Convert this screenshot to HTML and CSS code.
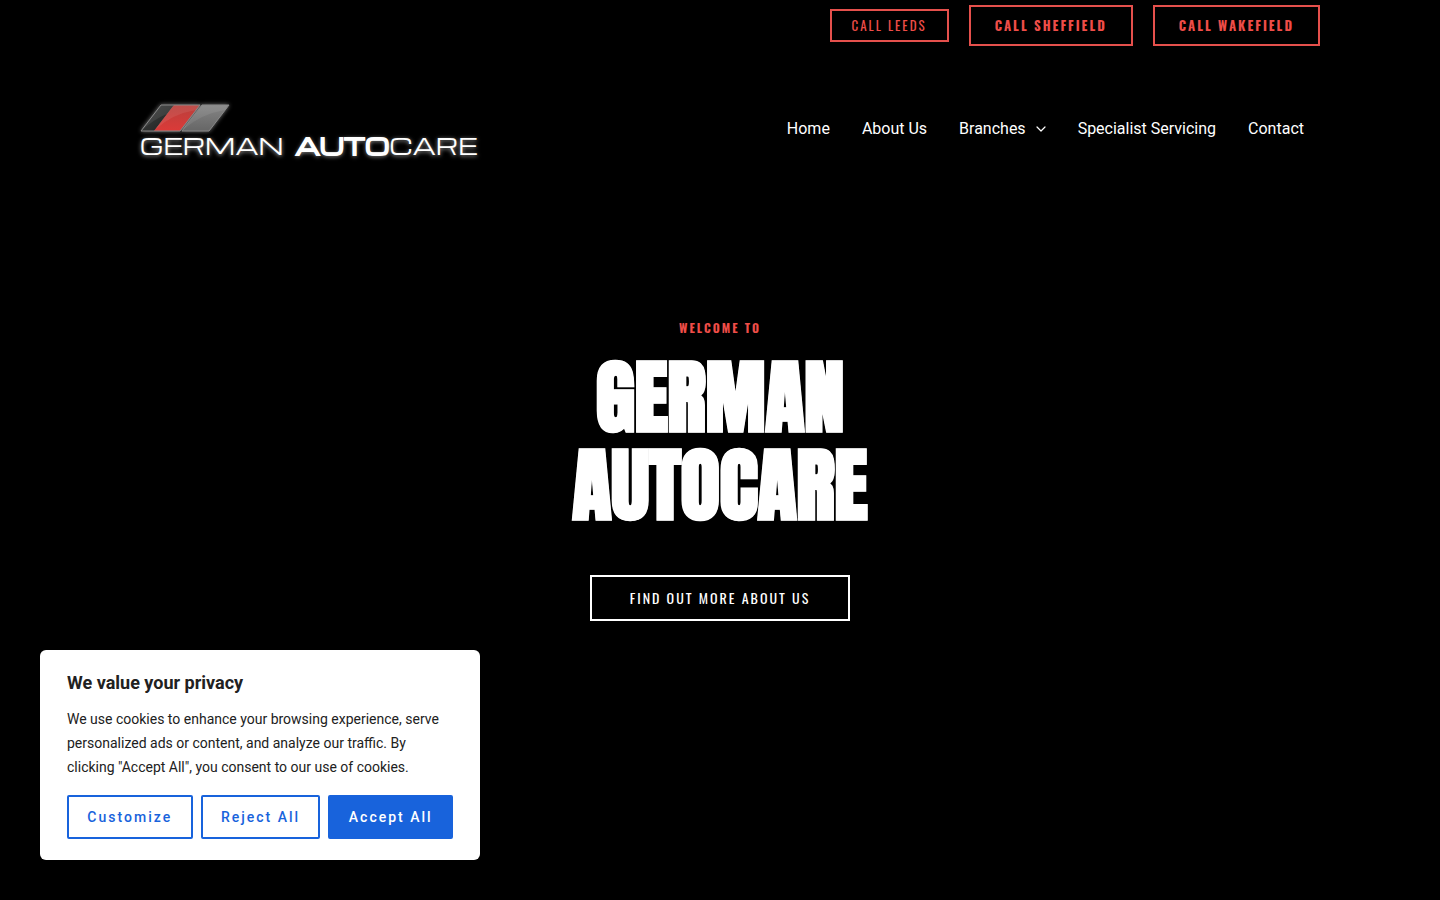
FILE: index.html
```
<!DOCTYPE html>
<html lang="en">
<head>
    <meta charset="UTF-8">
    <meta name="viewport" content="width=device-width, initial-scale=1.0">
    <title>German Autocare</title>
    <link rel="stylesheet" href="styles.css">
</head>

<body>
<div class="top-bar">
    <div class="container top-bar-inner">
        <a class="call-btn call-btn-small" href="#leeds">CALL LEEDS</a>
        <a class="call-btn" href="#sheffield">CALL SHEFFIELD</a>
        <a class="call-btn" href="#wakefield">CALL WAKEFIELD</a>
    </div>
</div>

<header class="container site-header">
    <a class="logo" href="#">
        <svg class="logo-mark" width="96" height="34" viewBox="1 -2 96 34" aria-hidden="true">
            <defs>
                <linearGradient id="dark" x1="0" y1="0" x2="1" y2="1">
                    <stop offset="0" stop-color="#444"/>
                    <stop offset="1" stop-color="#1c1f1e"/>
                </linearGradient>
                <linearGradient id="red" x1="0" y1="0" x2="0" y2="1">
                    <stop offset="0" stop-color="#b8403c"/>
                    <stop offset="1" stop-color="#dc3a38"/>
                </linearGradient>
                <linearGradient id="grey" x1="0" y1="0" x2="0" y2="1">
                    <stop offset="0" stop-color="#858585"/>
                    <stop offset="1" stop-color="#666"/>
                </linearGradient>
            </defs>
            <path d="M22 3H35L15 29H2Z" fill="url(#dark)"/>
            <path d="M35 3H61L41 29H15Z" fill="url(#red)"/>
            <path d="M63 3H90L70 29H43Z" fill="url(#grey)"/>
            <path d="M22 3H35L28 12Q15 17 2 29Z" fill="#fff" opacity=".08"/>
            <path d="M35 3H61L57 8Q33 12 17 27Z" fill="#fff" opacity=".08"/>
            <path d="M63 3H90L86 8Q62 12 45 27Z" fill="#fff" opacity=".08"/>
            <path d="M22 3H61L41 29H2Z M63 3H90L70 29H43Z" fill="none" stroke="#888" stroke-width="1"/>
        </svg>
        <span class="logo-name">
            <span>GERMAN</span>
            <span><b>AUTO</b>CARE</span>
        </span>
    </a>
    <nav class="main-nav">
        <a href="#home">Home</a>
        <a href="#about">About Us</a>
        <a href="#branches">Branches
            <svg class="arrow" width="10" height="6" viewBox="0 0 10 6" aria-hidden="true">
                <path d="M1 1L5 5L9 1" fill="none" stroke="currentColor" stroke-width="1.2" stroke-linecap="round" stroke-linejoin="round"/>
            </svg>
        </a>
        <a href="#servicing">Specialist Servicing</a>
        <a href="#contact">Contact</a>
    </nav>
</header>

<main class="hero">
    <p class="welcome">WELCOME TO</p>
    <h1 class="hero-title">GERMAN<br>AUTOCARE</h1>
    <a class="hero-btn" href="#about">FIND OUT MORE ABOUT US</a>
</main>

<section class="cookie-box" aria-labelledby="cookie-title">
    <h2 class="cookie-title" id="cookie-title">We value your privacy</h2>
    <p class="cookie-text">We use cookies to enhance your browsing experience, serve personalized ads or content, and analyze our traffic. By clicking "Accept All", you consent to our use of cookies.</p>
    <div class="cookie-buttons">
        <button class="cookie-btn" type="button">Customize</button>
        <button class="cookie-btn" type="button">Reject All</button>
        <button class="cookie-btn cookie-btn-accept" type="button">Accept All</button>
    </div>
</section>
</body>
</html>
```
FILE: styles.css
```
* {
    box-sizing: border-box;
}

body {
    margin: 0;
    min-height: 100vh;
    background-color: #000;
    color: #fff;
    font-family: Roboto, sans-serif;
    font-size: 16px;
}

a {
    color: inherit;
    text-decoration: none;
}

.container {
    max-width: 1200px;
    margin: 0 auto;
}

.top-bar {
    padding: 5px 0;
}

.top-bar-inner {
    display: flex;
    justify-content: flex-end;
    align-items: center;
    gap: 20px;
}

.call-btn {
    border: 2px solid #e5504c;
    color: #ef4d48;
    font-family: Oswald, "Liberation Sans Narrow", "Liberation Sans", sans-serif;
    font-size: 13px;
    font-weight: 700;
    letter-spacing: 2px;
    line-height: 17px;
    padding: 10px 24px;
}

.call-btn-small {
    font-weight: 400;
    padding: 6px 20px;
}

.site-header {
    display: flex;
    justify-content: space-between;
    align-items: center;
    padding: 49px 0 50px;
}

.logo {
    display: flex;
    flex-direction: column;
    padding-left: 20px;
}

.logo-mark {
    filter: drop-shadow(0 0 2px #777);
}

.logo-name {
    display: flex;
    align-items: baseline;
    gap: 12px;
    font-family: Michroma, "DejaVu Sans", sans-serif;
    font-size: 22px;
    line-height: 24px;
    text-shadow: 0 1px 4px #aaa;
}

.logo-name b {
    font-size: 23px;
    line-height: 20px;
    -webkit-text-stroke: 1px #fff;
}

.main-nav {
    display: flex;
}

.main-nav a {
    display: flex;
    align-items: center;
    gap: 10px;
    line-height: 24px;
    padding: 0 16px;
}

.hero {
    display: flex;
    flex-direction: column;
    align-items: center;
    padding: 112px 20px 80px;
    text-align: center;
}

.welcome {
    color: #ef4d48;
    font-family: Oswald, "Liberation Sans Narrow", "Liberation Sans", sans-serif;
    font-size: 12px;
    font-weight: 700;
    letter-spacing: 2px;
    line-height: 16px;
    margin: 0 0 17px;
}

.hero-title {
    font-family: Anton, "Liberation Sans Narrow", "Liberation Sans", sans-serif;
    font-size: 80px;
    font-weight: 700;
    line-height: 88px;
    margin: 0 0 46px;
    -webkit-text-stroke: 1px #fff;
}

.hero-btn {
    border: 2px solid #fff;
    font-family: Oswald, "Liberation Sans Narrow", "Liberation Sans", sans-serif;
    font-size: 14px;
    letter-spacing: 2px;
    line-height: 18px;
    padding: 12px 38px;
}

.cookie-box {
    position: fixed;
    left: 40px;
    bottom: 40px;
    width: 440px;
    max-width: calc(100% - 80px);
    background-color: #fff;
    border-radius: 6px;
    color: #212121;
    padding: 20px 27px 21px;
}

.cookie-title {
    font-size: 18px;
    font-weight: 700;
    line-height: 26px;
    margin: 0 0 11px;
}

.cookie-text {
    font-size: 14px;
    line-height: 24px;
    margin: 0 0 16px;
}

.cookie-buttons {
    display: flex;
    gap: 8px;
}

.cookie-btn {
    flex: 1 1 auto;
    background-color: #fff;
    border: 2px solid #1863dc;
    border-radius: 2px;
    color: #1863dc;
    font-family: Roboto, sans-serif;
    font-size: 14px;
    font-weight: 500;
    letter-spacing: 2px;
    line-height: 24px;
    padding: 8px 16px;
    white-space: nowrap;
}

.cookie-btn-accept {
    background-color: #1863dc;
    color: #fff;
}
```
